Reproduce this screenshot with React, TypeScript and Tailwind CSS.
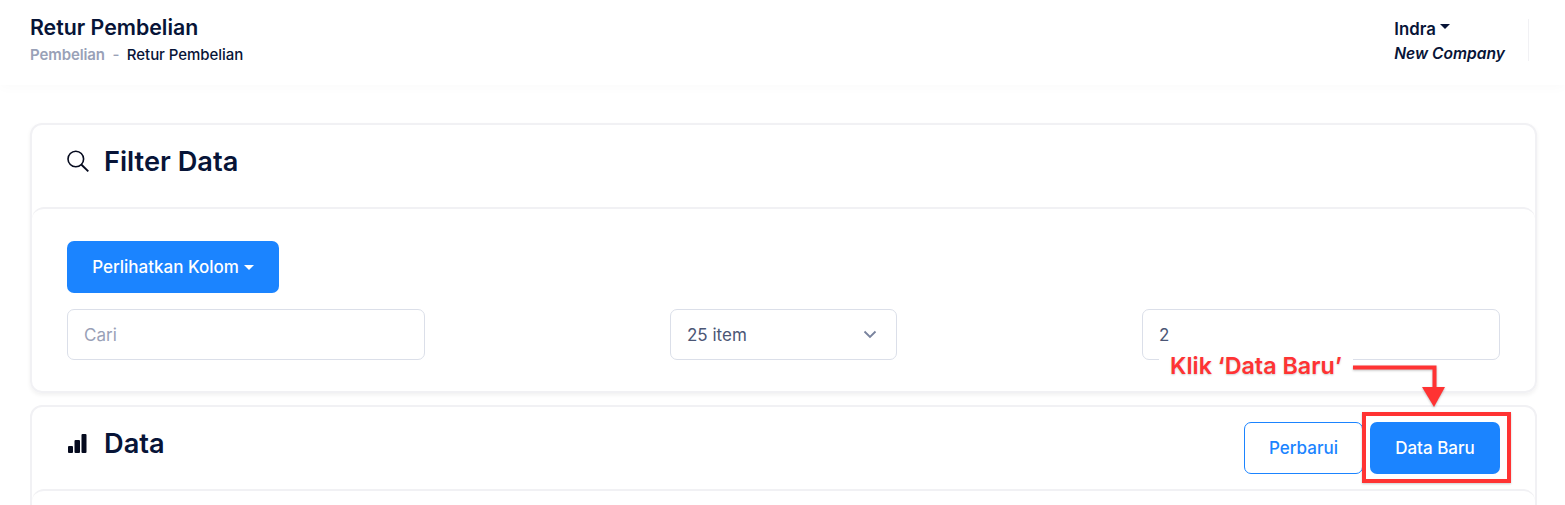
function Caret({ className }: { className: string }) {
  return <span className={`inline-block border-x-[5px] border-t-[5px] border-x-transparent ${className}`} />;
}

function CardHeader({ icon, title, children }: { icon: React.ReactNode; title: string; children?: React.ReactNode }) {
  return (
    <div className="flex h-[82px] items-center justify-between px-[35px]">
      <div className="mb-[9px] flex items-center">
        <span className="flex w-[37px] items-center">{icon}</span>
        <h3 className="text-[27.2px] font-semibold leading-none text-[#071437]">{title}</h3>
      </div>
      {children}
    </div>
  );
}

export default function App() {
  return (
    <div className="relative h-[505px] overflow-hidden bg-white font-['Inter',sans-serif]">
      {/* Top bar */}
      <header className="flex h-[85px] items-start justify-between bg-white pl-[30px] pr-[36px] shadow-[0_2px_12px_rgba(0,0,0,0.025)]">
        <div className="pt-[14px]">
          <h1 className="text-[21.3px] font-semibold leading-[26px] text-[#071437]">Retur Pembelian</h1>
          <div className="mt-[5px] flex items-center text-[15px] font-medium leading-[20px]">
            <span className="font-semibold tracking-[-0.1px] text-[#99a1b7]">Pembelian</span>
            <span className="mx-[7.5px] text-[#99a1b7]">-</span>
            <span className="tracking-[-0.05px] text-[#071437]">Retur Pembelian</span>
          </div>
        </div>
        <div className="mt-[19px] flex h-[42px] items-start border-r border-[#f1f1f4] pr-[23px]">
          <div>
            <div className="flex items-center text-[16.8px] font-semibold leading-[20px] text-[#071437]">
              Indra
              <Caret className="mb-[5px] ml-[4px] border-t-[#071437]" />
            </div>
            <div className="mt-[5px] text-[15.6px] font-semibold italic leading-[20px] text-[#071437]">New Company</div>
          </div>
        </div>
      </header>

      <main className="pl-[30px] pr-[28px] pt-[38px]">
        {/* Filter card */}
        <section className="rounded-[12px] border-2 border-[#f1f1f4] shadow-[0_2px_4px_rgba(0,0,0,0.06)]">
          <CardHeader
            icon={
              <svg width="23" height="23" viewBox="0 0 23 23" fill="none" stroke="#050a1e" strokeWidth="1.6">
                <circle cx="8.8" cy="9" r="7.8" />
                <path d="m14.5 14.8 6.8 6.6" strokeWidth="1.9" />
              </svg>
            }
            title="Filter Data"
          />
          <div className="h-[184px] rounded-[12px] border-t-2 border-[#f1f1f4] px-[35px] pt-[32px]">
            <button className="flex h-[52px] w-[212px] items-center justify-center rounded-[7px] bg-[#1b84ff] pt-[2px] text-[17px] font-medium text-white">
              Perlihatkan Kolom
              <Caret className="mb-[2px] ml-[5px] border-t-white" />
            </button>
            <div className="mt-[16px] flex justify-between">
              <div className="flex h-[51px] w-[358px] items-center rounded-[7px] border border-[#dbdfe9] pl-[16px] pt-[2px] text-[17px] text-[#99a1b7]">
                Cari
              </div>
              <div className="flex h-[51px] w-[227px] items-center justify-between rounded-[7px] border border-[#dbdfe9] pl-[16px] pr-[19px] text-[17px] text-[#4b5675]">
                <span className="pt-[2px]">25 item</span>
                <svg width="14" height="9" viewBox="0 0 14 9" fill="none" stroke="#78829d" strokeWidth="1.8">
                  <path d="M1.5 1.5 7 7l5.5-5.5" />
                </svg>
              </div>
              <div className="flex h-[51px] w-[358px] items-center rounded-[7px] border border-[#dbdfe9] pl-[16px] pt-[2px] text-[17px] text-[#4b5675]">
                2
              </div>
            </div>
          </div>
        </section>

        {/* Data card */}
        <section className="mt-[12px] rounded-[12px] border-2 border-[#f1f1f4]">
          <CardHeader
            icon={
              <svg width="20" height="19" viewBox="0 0 20 19" fill="#050a1e">
                <rect x="1" y="12" width="5" height="7" rx="1" />
                <rect x="7.5" y="6" width="5.5" height="13" rx="1" />
                <rect x="14.5" y="0" width="5" height="19" rx="1" />
              </svg>
            }
            title="Data"
          >
            <div className="flex gap-[7px]">
              <button className="h-[52px] w-[119px] rounded-[7px] border border-[#1b84ff] pt-[1px] text-[17px] font-medium text-[#1b84ff]">
                Perbarui
              </button>
              <button className="h-[52px] w-[130px] rounded-[7px] bg-[#1b84ff] pt-[1px] text-[17px] font-medium text-white">
                Data Baru
              </button>
            </div>
          </CardHeader>
          <div className="h-[60px] rounded-[12px] border-t-2 border-[#f1f1f4]" />
        </section>
      </main>

      {/* Annotation */}
      <div className="absolute left-[1159px] top-[354px] flex h-[24px] w-[194px] items-center justify-center bg-white text-[23.3px] font-semibold leading-none text-[#ff3333] [text-shadow:0_1px_2px_rgba(0,0,0,0.2)]">
        Klik ‘Data Baru’
      </div>
      <svg className="absolute left-[1350px] top-[360px] drop-shadow-[0_1px_1px_rgba(0,0,0,0.25)]" width="100" height="50" viewBox="0 0 100 50" fill="none">
        <path d="M3 7.5h81.5V28" stroke="#ff3333" strokeWidth="4" />
        <path d="M72 27h23L84 47z" fill="#ff3333" />
      </svg>
      <div className="absolute left-[1362px] top-[412px] h-[71px] w-[149px] border-4 border-[#ff3333] shadow-[0_1px_2px_rgba(0,0,0,0.2)]" />
    </div>
  );
}
